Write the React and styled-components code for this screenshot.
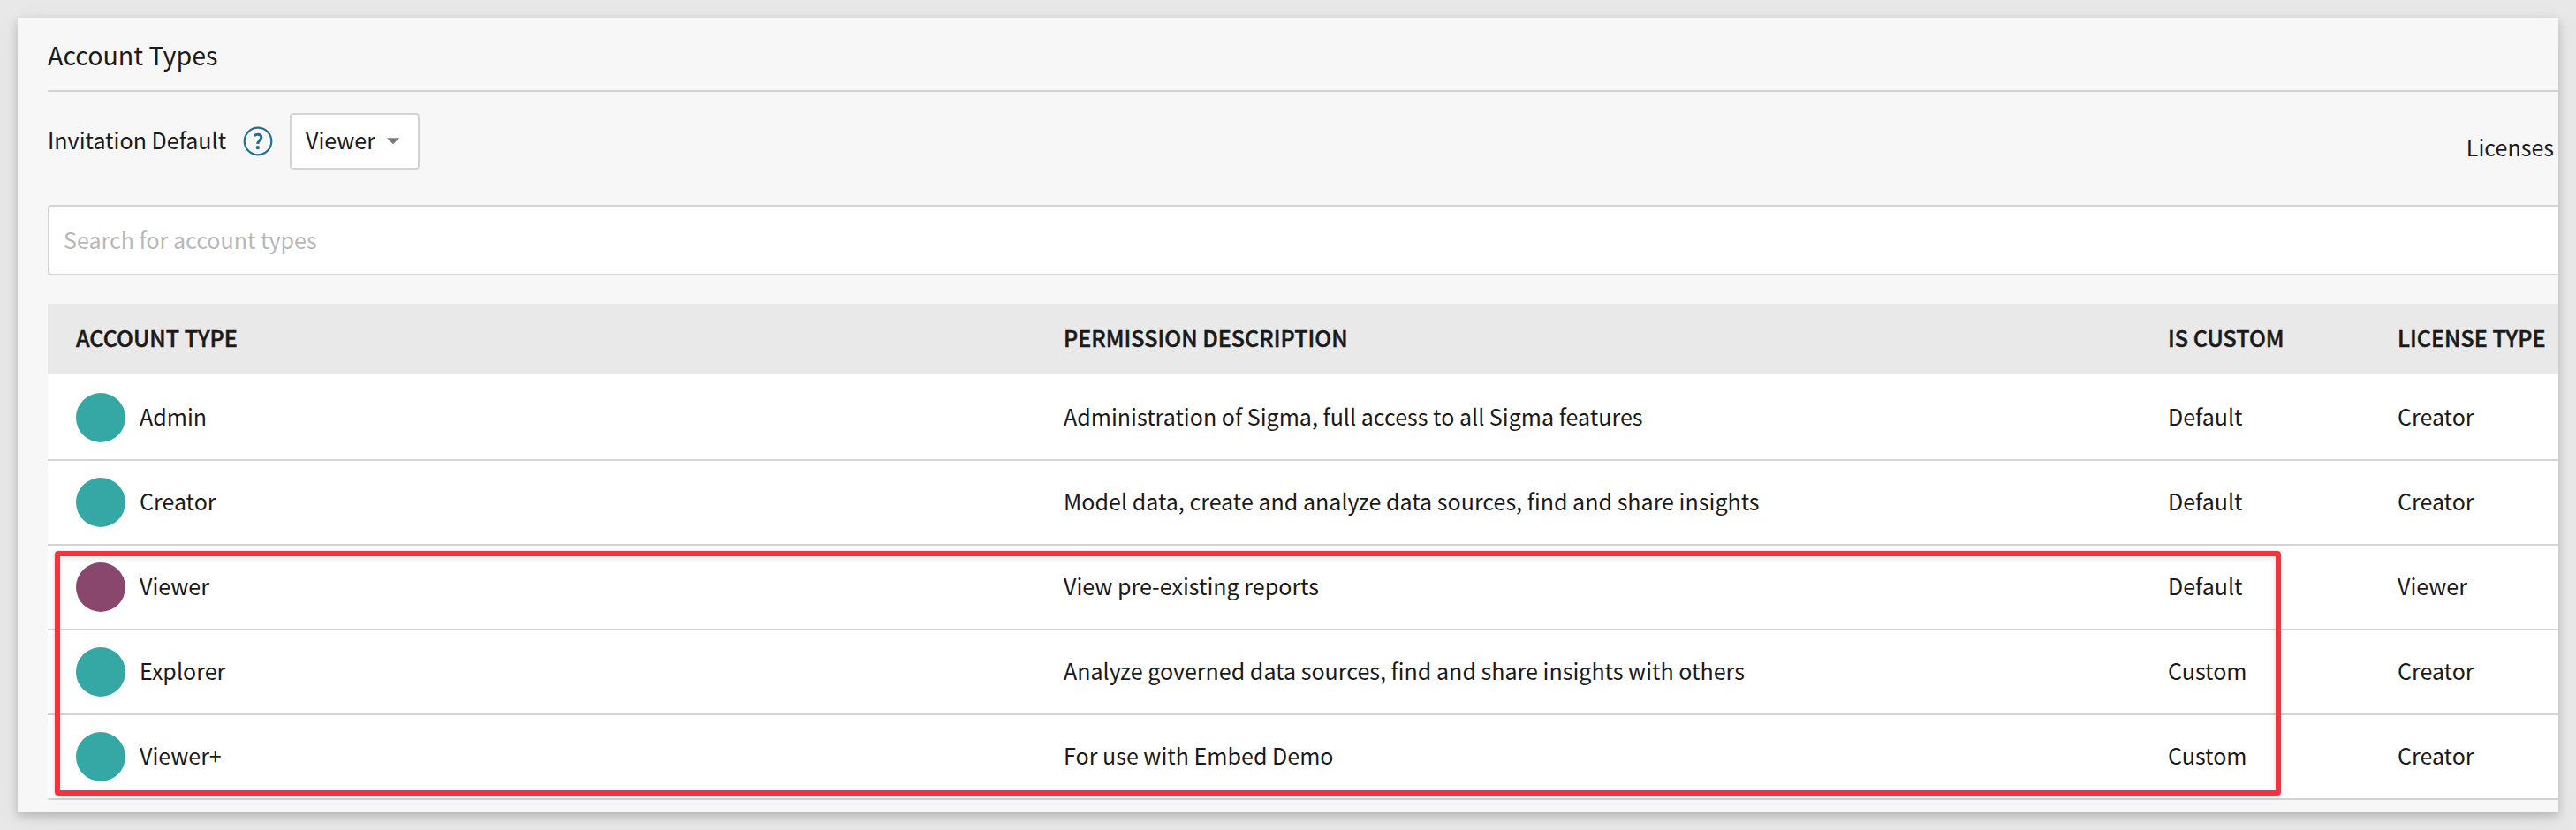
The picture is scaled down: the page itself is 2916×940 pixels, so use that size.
import React from 'react';
import styled, { createGlobalStyle } from 'styled-components';

const Global = createGlobalStyle`
  * { box-sizing: border-box; }
  html, body { margin: 0; padding: 0; }
  body {
    height: 940px;
    overflow: hidden;
    background: #e8e8e8;
    color: #1a1a1a;
    font-family: 'Noto Sans CJK SC', 'Noto Sans', sans-serif;
    font-size: 25.06px;
    line-height: 36px;
  }
`;

const Page = styled.main`
  height: 940px;
  padding: 20px;
`;

const Card = styled.section`
  position: relative;
  height: 900px;
  padding-left: 34px;
  background: #f7f7f7;
  box-shadow: 0 4px 10px rgba(0, 0, 0, 0.2), 0 8px 32px rgba(0, 0, 0, 0.05);
`;

const Content = styled.div`
  display: flex;
  flex-direction: column;
  height: 100%;
  overflow: hidden;
`;

const Title = styled.h1`
  flex: none;
  height: 84px;
  margin: 0;
  padding-top: 21px;
  border-bottom: 2px solid #d3d3d3;
  font-size: 28.6px;
  font-weight: 400;
  line-height: 41px;
`;

const Toolbar = styled.div`
  display: flex;
  justify-content: space-between;
  flex: none;
  height: 128px;
  padding: 24px 5px 0 0;
`;

const Invitation = styled.div`
  display: flex;
  align-items: center;
  height: 64px;
`;

const Text = styled.span`
  display: block;
  padding-bottom: 4px;
  white-space: nowrap;
`;

const Label = styled(Text)`
  width: 202px;
`;

const HelpIcon = styled.svg`
  width: 34px;
  height: 34px;
  margin: 0 19px;
`;

const Select = styled.button`
  display: flex;
  align-items: center;
  gap: 13px;
  width: 147px;
  height: 64px;
  padding: 0 0 0 16px;
  border: 2px solid #d3d3d3;
  border-radius: 4px;
  background: #fff;
  color: inherit;
  font: inherit;
`;

const Caret = styled.svg`
  width: 14px;
  height: 8px;
`;

const Licenses = styled(Text)`
  padding-top: 20px;
`;

const Search = styled.input`
  flex: none;
  height: 80px;
  padding: 0 16px 2px;
  border: 2px solid #d3d3d3;
  border-right: 0;
  border-radius: 4px 0 0 4px;
  background: #fff;
  font: inherit;
  outline: none;
  &::placeholder { color: #b8b8b8; opacity: 1; }
`;

const Table = styled.div`
  display: flex;
  flex-direction: column;
  margin-top: 32px;
`;

const Row = styled.div`
  display: grid;
  grid-template-columns: 1118px 1250px 260px 1fr;
  align-items: center;
  height: ${(p) => (p.$first ? 98 : 96)}px;
  padding: ${(p) => (p.$first ? 2 : 0)}px 0 0 32px;
  border-bottom: 2px solid #d3d3d3;
  background: #fff;
`;

const HeaderRow = styled(Row)`
  height: 80px;
  border-bottom: 0;
  background: #e9e9e9;
  font-weight: 500;
  letter-spacing: 0.03px;
  -webkit-text-stroke: 0.5px #1a1a1a;
`;

const Account = styled.div`
  display: flex;
  align-items: center;
  gap: 16px;
`;

const Avatar = styled.span`
  width: 56px;
  height: 56px;
  border-radius: 50%;
  background: ${(p) => p.$color};
`;

const Highlight = styled.div`
  position: absolute;
  left: 42px;
  top: 603.6px;
  width: 2520px;
  height: 277px;
  border: 6px solid #f5333f;
  border-radius: 4px;
  box-shadow: 0 1px 5px rgba(0, 0, 0, 0.18), inset 0 2px 6px rgba(0, 0, 0, 0.12);
`;

const TEAL = '#35a8a5';
const PLUM = '#89476e';

const accounts = [
  { name: 'Admin', color: TEAL, description: 'Administration of Sigma, full access to all Sigma features', custom: 'Default', license: 'Creator' },
  { name: 'Creator', color: TEAL, description: 'Model data, create and analyze data sources, find and share insights', custom: 'Default', license: 'Creator' },
  { name: 'Viewer', color: PLUM, description: 'View pre-existing reports', custom: 'Default', license: 'Viewer' },
  { name: 'Explorer', color: TEAL, description: 'Analyze governed data sources, find and share insights with others', custom: 'Custom', license: 'Creator' },
  { name: 'Viewer+', color: TEAL, description: 'For use with Embed Demo', custom: 'Custom', license: 'Creator' },
];

export default function App() {
  return (
    <>
      <Global />
      <Page>
        <Card>
          <Content>
            <Title>Account Types</Title>
            <Toolbar>
              <Invitation>
                <Label>Invitation Default</Label>
                <HelpIcon viewBox="0 0 34 34" fill="none" stroke="#226e96">
                  <circle cx="17" cy="17" r="15.3" strokeWidth="2.2" />
                  <path d="M12.8 10.8C14 9.7 15.2 9.2 16.7 9.2c2.5 0 4.1 1.2 4.1 3.3 0 3.2-4.3 3.9-4 7.5" strokeWidth="3" />
                  <circle cx="16.8" cy="24.1" r="2.2" fill="#226e96" stroke="none" />
                </HelpIcon>
                <Select>
                  <Text>Viewer</Text>
                  <Caret viewBox="0 0 14 8"><path d="M0 .2h14L7 7.3z" fill="#7b7b7b" /></Caret>
                </Select>
              </Invitation>
              <Licenses>Licenses</Licenses>
            </Toolbar>
            <Search placeholder="Search for account types" />
            <Table>
              <HeaderRow>
                <Text>ACCOUNT TYPE</Text>
                <Text>PERMISSION DESCRIPTION</Text>
                <Text>IS CUSTOM</Text>
                <Text>LICENSE TYPE</Text>
              </HeaderRow>
              {accounts.map((a, i) => (
                <Row key={a.name} $first={i === 0}>
                  <Account><Avatar $color={a.color} /><Text>{a.name}</Text></Account>
                  <Text>{a.description}</Text>
                  <Text>{a.custom}</Text>
                  <Text>{a.license}</Text>
                </Row>
              ))}
            </Table>
          </Content>
          <Highlight />
        </Card>
      </Page>
    </>
  );
}
